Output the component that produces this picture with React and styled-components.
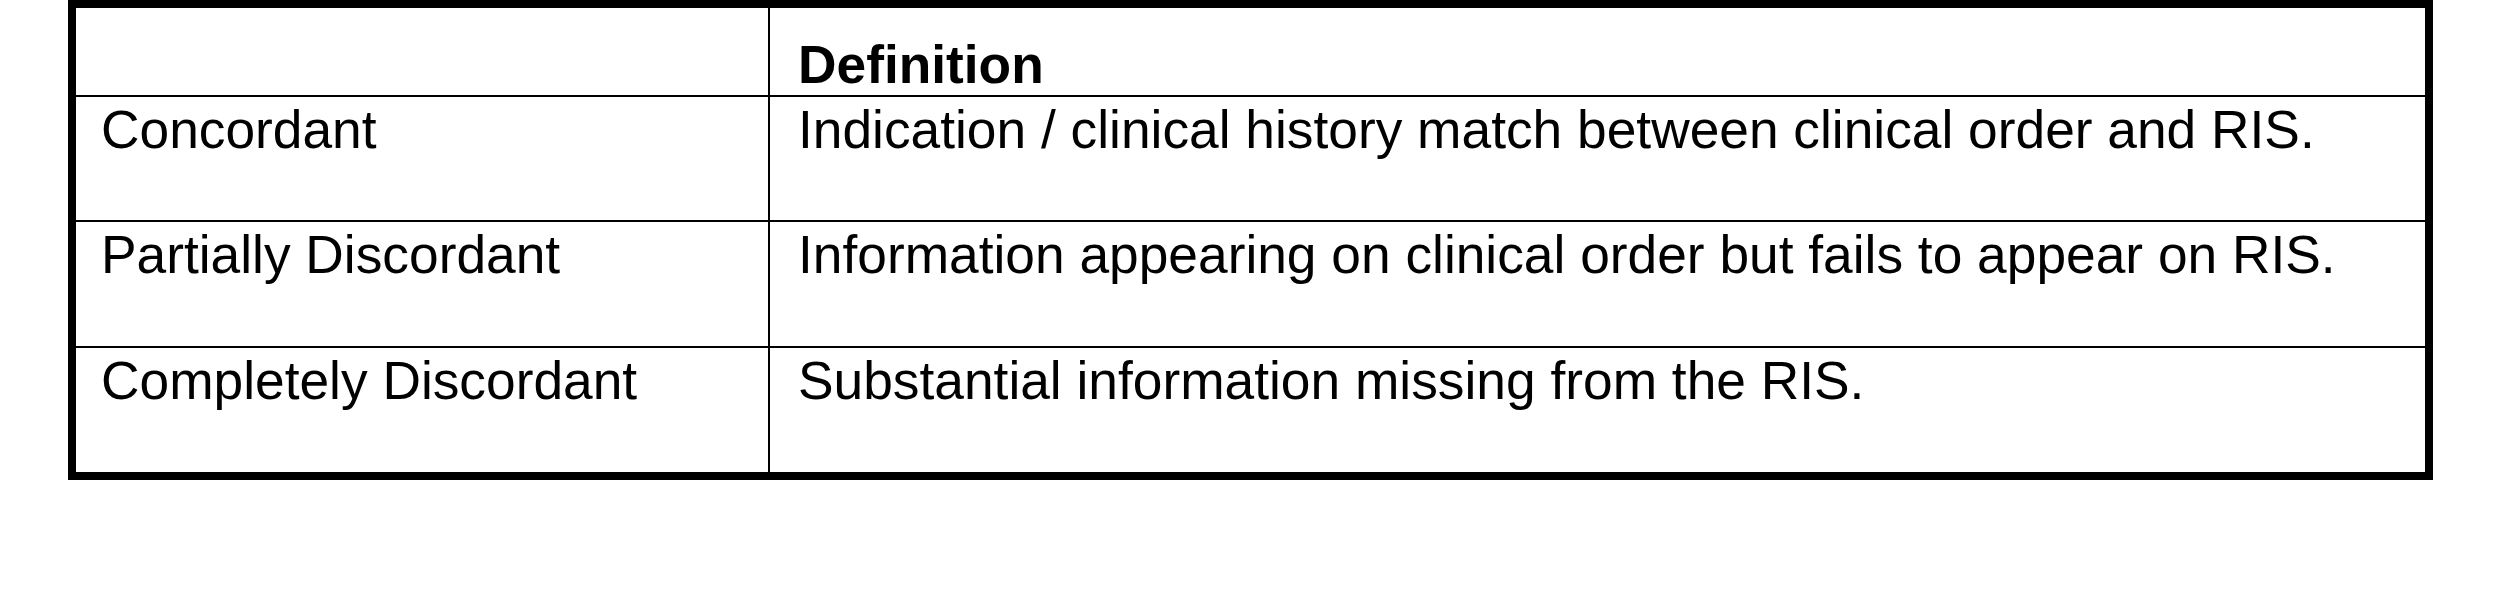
import React from 'react';
import styled, { createGlobalStyle } from 'styled-components';

const GlobalStyle = createGlobalStyle`
    body {
        margin: 0;
        background: #ffffff;
        font-family: "Liberation Sans", Arial, sans-serif;
        color: #000000;
    }
`;

const Page = styled.div`
    padding: 0 0 0 68px;
`;

const Table = styled.table`
    border-collapse: separate;
    border-spacing: 0;
    border: 8px solid #000000;
    width: 2365px;
    table-layout: fixed;
`;

const Col = styled.col`
    width: ${(p) => p.$width}px;
`;

const HeadCell = styled.th`
    box-sizing: border-box;
    height: 89px;
    padding: 0 0 4px ${(p) => (p.$first ? 25 : 28)}px;
    border-right: ${(p) => (p.$lastCol ? 'none' : '2px solid #000')};
    border-bottom: 2px solid #000;
    vertical-align: bottom;
    text-align: left;
    font-size: 53.3px;
    line-height: 53.3px;
    font-weight: 700;
`;

const Cell = styled.td`
    box-sizing: border-box;
    height: ${(p) => p.$height}px;
    padding: 6px 0 0 ${(p) => (p.$first ? 25 : 28)}px;
    border-right: ${(p) => (p.$lastCol ? 'none' : '2px solid #000')};
    border-bottom: ${(p) => (p.$lastRow ? 'none' : '2px solid #000')};
    vertical-align: top;
    text-align: left;
    font-size: 53.3px;
    line-height: 53.3px;
    font-weight: 400;
    white-space: nowrap;
`;

const rows = [
    {
        term: 'Concordant',
        definition: 'Indication / clinical history match between clinical order and RIS.',
        height: 125,
    },
    {
        term: 'Partially Discordant',
        definition: 'Information appearing on clinical order but fails to appear on RIS.',
        height: 126,
    },
    {
        term: 'Completely Discordant',
        definition: 'Substantial information missing from the RIS.',
        height: 124,
    },
];

const App = () => {
    return (
        <Page>
            <GlobalStyle />
            <Table>
                <colgroup>
                    <Col $width={694} />
                    <Col $width={1655} />
                </colgroup>
                <thead>
                    <tr>
                        <HeadCell $first />
                        <HeadCell $lastCol>Definition</HeadCell>
                    </tr>
                </thead>
                <tbody>
                    {rows.map((row, i) => (
                        <tr key={row.term}>
                            <Cell $first $height={row.height} $lastRow={i === rows.length - 1}>
                                {row.term}
                            </Cell>
                            <Cell $lastCol $height={row.height} $lastRow={i === rows.length - 1}>
                                {row.definition}
                            </Cell>
                        </tr>
                    ))}
                </tbody>
            </Table>
        </Page>
    );
};

export default App;
